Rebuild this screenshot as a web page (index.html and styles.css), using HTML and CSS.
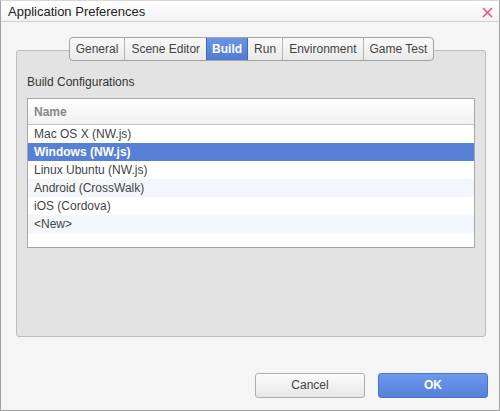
FILE: index.html
```html
<!DOCTYPE html>
<html>
<head>
<meta charset="utf-8">
<link rel="stylesheet" href="styles.css">
</head>
<body>
<div class="window">
  <div class="titlebar">
    <span class="title">Application Preferences</span>
    <svg class="close" width="11" height="11" viewBox="0 0 11 11"><path d="M1 1 L10 10 M10 1 L1 10" stroke="#f04a7a" stroke-width="1.5" fill="none"/></svg>
  </div>
  <div class="content">
    <div class="tabs">
      <div class="tab">General</div>
      <div class="tab">Scene Editor</div>
      <div class="tab active">Build</div>
      <div class="tab">Run</div>
      <div class="tab">Environment</div>
      <div class="tab">Game Test</div>
    </div>
    <div class="panel">
      <div class="label">Build Configurations</div>
      <div class="list">
        <div class="header">Name</div>
        <div class="row">Mac OS X (NW.js)</div>
        <div class="row selected">Windows (NW.js)</div>
        <div class="row">Linux Ubuntu (NW.js)</div>
        <div class="row alt">Android (CrossWalk)</div>
        <div class="row">iOS (Cordova)</div>
        <div class="row alt">&lt;New&gt;</div>
      </div>
    </div>
    <div class="buttons">
      <div class="btn cancel">Cancel</div>
      <div class="btn ok">OK</div>
    </div>
  </div>
</div>
</body>
</html>
```
FILE: styles.css
```css
html, body {
  margin: 0;
  padding: 0;
}
body {
  width: 500px;
  height: 411px;
  font-family: "Liberation Sans", Arial, sans-serif;
  font-size: 12px;
  color: #333;
}
.window {
  box-sizing: border-box;
  width: 500px;
  height: 411px;
  background: #f5f5f5;
  border: 1px solid #a3a3a3;
  border-top-color: #d8d8d8;
  display: flex;
  flex-direction: column;
}
.titlebar {
  height: 20px;
  border-bottom: 1px solid #cfcfcf;
  background: linear-gradient(#ffffff, #f3f3f3);
  display: flex;
  align-items: center;
  justify-content: space-between;
  padding: 0 6px 0 7px;
}
.title {
  font-size: 13px;
  color: #222;
  margin-top: 1px;
}
.close {
  margin-top: 2px;
}
.content {
  flex: 1;
  display: flex;
  flex-direction: column;
  padding: 15px 13px 0 15px;
}
.tabs {
  display: flex;
  align-self: center;
  margin-left: 1px;
  position: relative;
  z-index: 1;
  border: 1px solid #a3a3a3;
  border-radius: 4px;
  overflow: hidden;
  background: linear-gradient(#fafafa, #e9e9e9);
  height: 22px;
}
.tab {
  padding: 0 6px;
  line-height: 23px;
  color: #444;
  border-left: 1px solid #b5b5b5;
}
.tab:first-child {
  border-left: none;
}
.tab.active {
  background: linear-gradient(#6b95e3, #4f7bd3);
  color: #fff;
  font-weight: bold;
  border-left: 1px solid #3f68bd;
  box-shadow: inset -1px 0 0 #3f68bd;
  padding: 0 6px 0 5px;
}
.tab.active + .tab {
  border-left: none;
}
.panel {
  margin-top: -11px;
  height: 287px;
  box-sizing: border-box;
  background: #e3e3e3;
  border: 1px solid #bdbdbd;
  border-radius: 3px;
  padding: 24px 10px 0 10px;
  width: 470px;
}
.label {
  color: #333;
  line-height: 14px;
  margin-bottom: 9px;
}
.list {
  box-sizing: border-box;
  height: 150px;
  background: #fff;
  border: 1px solid #a6a6a6;
  width: 448px;
}
.header {
  height: 26px;
  line-height: 27px;
  box-sizing: border-box;
  padding-left: 6px;
  font-weight: bold;
  color: #888;
  background: linear-gradient(#ffffff, #f1f1f1);
  border-bottom: 1px solid #c6c6c6;
}
.row {
  height: 18px;
  line-height: 18px;
  padding-left: 6px;
  color: #444;
}
.row.alt {
  background: #f3f7fb;
}
.row.selected {
  background: #5681d6;
  color: #fff;
  font-weight: bold;
}
.buttons {
  display: flex;
  justify-content: flex-end;
  gap: 13px;
  margin-top: 36px;
  margin-right: -2px;
}
.btn {
  box-sizing: border-box;
  width: 110px;
  height: 25px;
  line-height: 23px;
  text-align: center;
  border-radius: 3px;
}
.cancel {
  border: 1px solid #adadad;
  background: linear-gradient(#fcfcfc, #e6e6e6);
  color: #444;
}
.ok {
  border: 1px solid #4a74c8;
  background: linear-gradient(#6c98ee, #5580d8);
  color: #fff;
  font-weight: bold;
}
```
